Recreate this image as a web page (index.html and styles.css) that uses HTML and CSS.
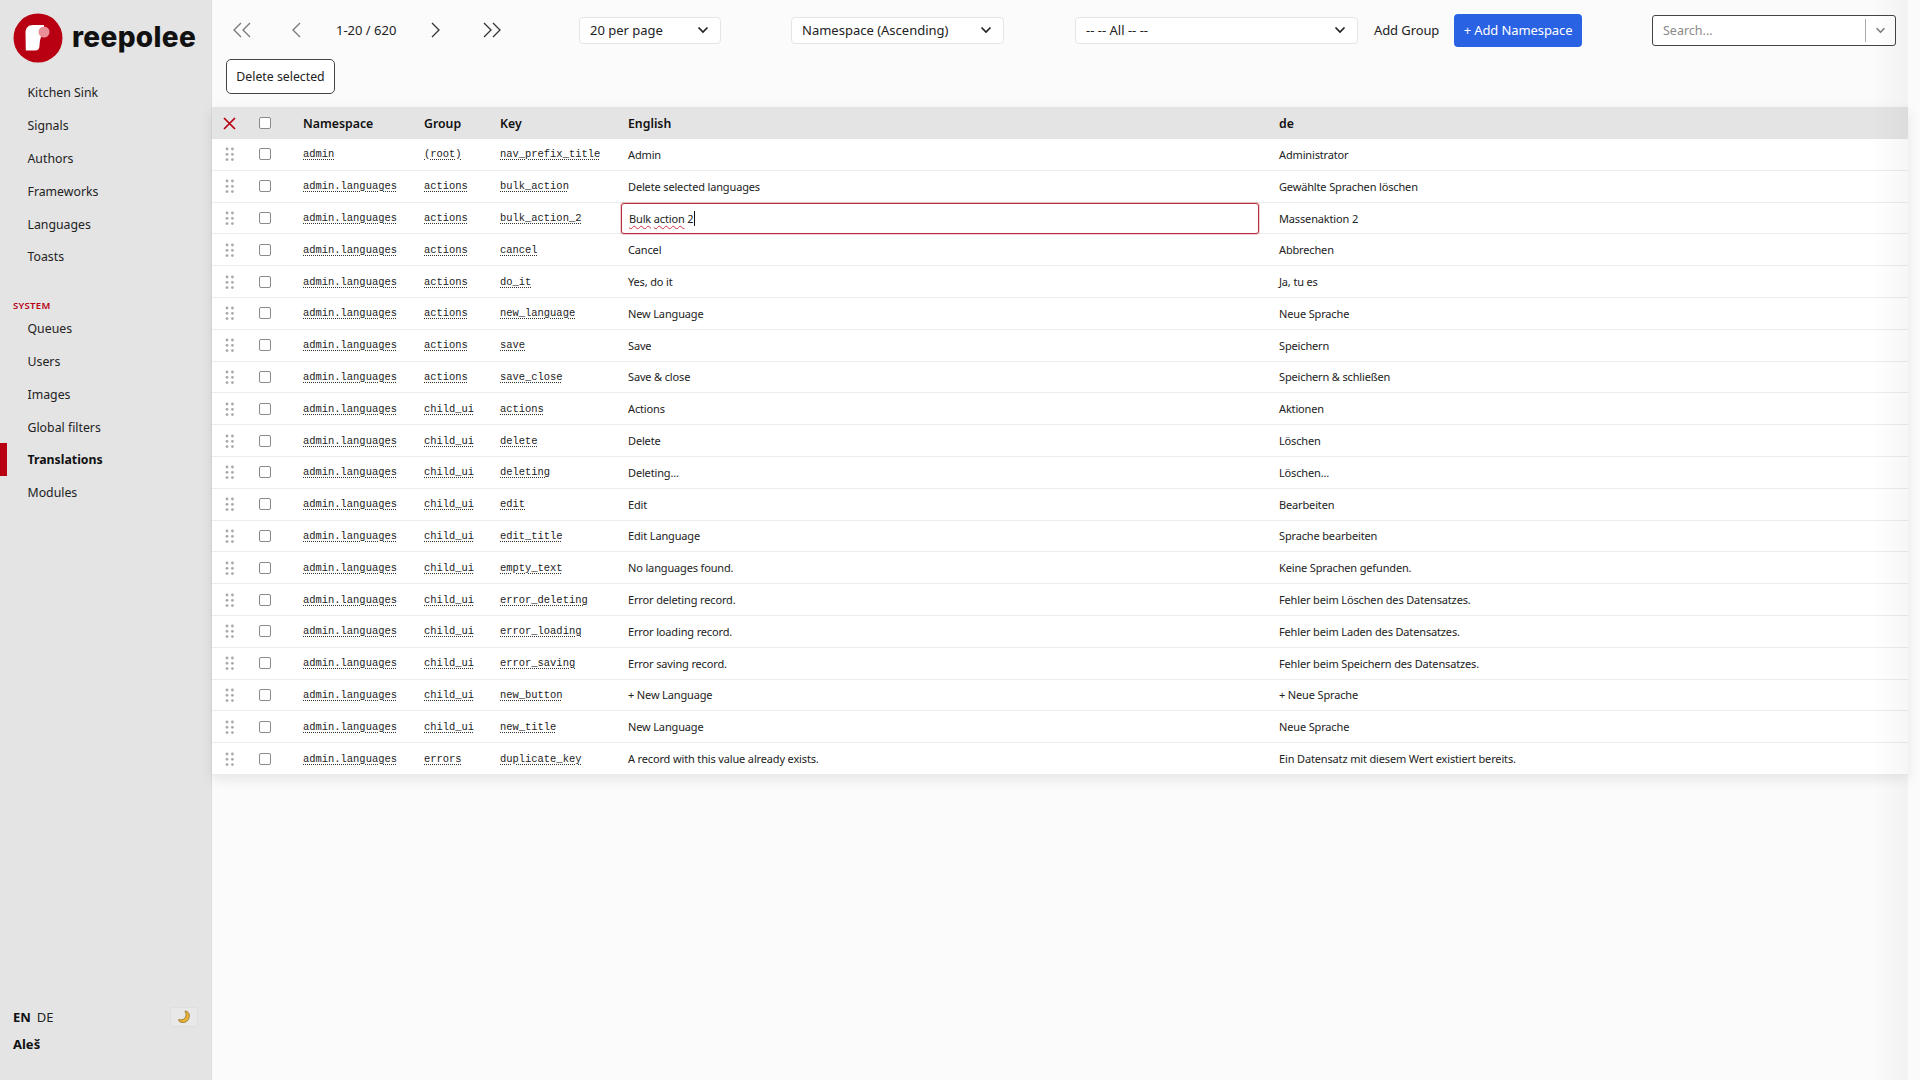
FILE: index.html
```html
<!DOCTYPE html>
<html lang="en">
<head>
    <meta charset="UTF-8">
    <meta name="viewport" content="width=device-width, initial-scale=1.0">
    <title>Translations</title>
    <link rel="stylesheet" href="styles.css">
</head>
<body>
    <svg class="defs" width="0" height="0" aria-hidden="true">
        <symbol id="grip" viewBox="0 0 10 14">
            <circle cx="2" cy="2" r="1.4"/><circle cx="7.4" cy="2" r="1.4"/>
            <circle cx="2" cy="7.3" r="1.4"/><circle cx="7.4" cy="7.3" r="1.4"/>
            <circle cx="2" cy="12.6" r="1.4"/><circle cx="7.4" cy="12.6" r="1.4"/>
        </symbol>
        <symbol id="caret" viewBox="0 0 12 8">
            <path d="M1.5 1.5 6 6l4.5-4.5" fill="none" stroke="currentColor" stroke-width="1.7"/>
        </symbol>
    </svg>

    <aside class="sidebar">
        <a href="#" class="logo">
            <svg class="logo__mark" width="50" height="50" viewBox="0 0 50 50">
                <circle cx="25" cy="25" r="24.5" fill="#b80012"/>
                <path d="M12.500 20C12.500 15 15 12 20 12H31V20C28 22 27 26 26.500 33C26.300 36 25 37.500 22 37.500H12.800Z" fill="#fff"/>
                <circle cx="31" cy="19" r="5.500" fill="#e88f98"/>
            </svg>
            <span class="logo__text">reepolee</span>
        </a>

        <ul class="menu">
            <li class="menu__item"><a href="#" class="menu__link">Kitchen Sink</a></li>
            <li class="menu__item"><a href="#" class="menu__link">Signals</a></li>
            <li class="menu__item"><a href="#" class="menu__link">Authors</a></li>
            <li class="menu__item"><a href="#" class="menu__link">Frameworks</a></li>
            <li class="menu__item"><a href="#" class="menu__link">Languages</a></li>
            <li class="menu__item"><a href="#" class="menu__link">Toasts</a></li>
        </ul>

        <div class="menu__title">SYSTEM</div>
        <ul class="menu">
            <li class="menu__item"><a href="#" class="menu__link">Queues</a></li>
            <li class="menu__item"><a href="#" class="menu__link">Users</a></li>
            <li class="menu__item"><a href="#" class="menu__link">Images</a></li>
            <li class="menu__item"><a href="#" class="menu__link">Global filters</a></li>
            <li class="menu__item menu__item--active"><a href="#" class="menu__link">Translations</a></li>
            <li class="menu__item"><a href="#" class="menu__link">Modules</a></li>
        </ul>

        <div class="sidebar__foot">
            <div class="langs">
                <b>EN</b><span>DE</span>
                <button class="theme" aria-label="Toggle theme">
                    <svg width="14" height="14" viewBox="0 0 14 14">
                        <path d="M8.500 1c1.800.300 3.500 1.500 3.800 4 .3 3.500-1.700 7-5.500 7.500-2.500.3-4.600-.7-5.300-2.300-.2-.6.2-.8.800-.6 3.800 1 6.500-1.300 6.800-4.800 0-1.300-.6-2.500-1.100-3.200-.2-.3 0-.6.500-.6z" fill="#e8b339" stroke="#8a6414" stroke-width=".7"/>
                    </svg>
                </button>
            </div>
            <div class="user">Aleš</div>
        </div>
    </aside>

    <main class="main">
        <div class="toolbar">
            <div class="pager">
                <a href="#" class="pager__btn pager__btn--first"><svg width="22" height="16" viewBox="0 0 22 16"><path d="M9 1 2 8l7 7M18 1l-7 7 7 7"/></svg></a>
                <a href="#" class="pager__btn pager__btn--prev"><svg width="12" height="16" viewBox="0 0 12 16"><path d="M9 1 2 8l7 7"/></svg></a>
                <span class="pager__count">1-20 / 620</span>
                <a href="#" class="pager__btn pager__btn--next"><svg width="12" height="16" viewBox="0 0 12 16"><path d="m3 1 7 7-7 7"/></svg></a>
                <a href="#" class="pager__btn pager__btn--last"><svg width="22" height="16" viewBox="0 0 22 16"><path d="m4 1 7 7-7 7M13 1l7 7-7 7"/></svg></a>
            </div>
            <div class="select select--per-page">20 per page<svg class="select__caret" width="12" height="8"><use href="#caret"/></svg></div>
            <div class="select select--sort">Namespace (Ascending)<svg class="select__caret" width="12" height="8"><use href="#caret"/></svg></div>
            <div class="select select--group">-- -- All -- --<svg class="select__caret" width="12" height="8"><use href="#caret"/></svg></div>
            <a href="#" class="link-btn">Add Group</a>
            <a href="#" class="btn-primary">+ Add Namespace</a>
            <div class="search">
                <span class="search__input">Search...</span>
                <span class="search__toggle"><svg width="11" height="7"><use href="#caret"/></svg></span>
            </div>
        </div>

        <div class="actions">
            <button class="btn">Delete selected</button>
        </div>

        <div class="table">
            <div class="row row--head">
                <span class="cell cell--x"><svg width="13" height="13" viewBox="0 0 13 13"><path d="m1 1 11 11M12 1 1 12" fill="none" stroke="#b80012" stroke-width="1.700"/></svg></span>
                <span class="cell"><input class="check" type="checkbox"></span>
                <span class="cell">Namespace</span>
                <span class="cell">Group</span>
                <span class="cell">Key</span>
                <span class="cell">English</span>
                <span class="cell">de</span>
            </div>

            <div class="row">
                <span class="cell cell--grip"><svg class="grip" width="10" height="14"><use href="#grip"/></svg></span>
                <span class="cell"><input class="check" type="checkbox"></span>
                <span class="cell"><span class="code">admin</span></span>
                <span class="cell"><span class="code">(root)</span></span>
                <span class="cell"><span class="code">nav_prefix_title</span></span>
                <span class="cell">Admin</span>
                <span class="cell">Administrator</span>
            </div>
            <div class="row">
                <span class="cell cell--grip"><svg class="grip" width="10" height="14"><use href="#grip"/></svg></span>
                <span class="cell"><input class="check" type="checkbox"></span>
                <span class="cell"><span class="code">admin.languages</span></span>
                <span class="cell"><span class="code">actions</span></span>
                <span class="cell"><span class="code">bulk_action</span></span>
                <span class="cell">Delete selected languages</span>
                <span class="cell">Gewählte Sprachen löschen</span>
            </div>
            <div class="row">
                <span class="cell cell--grip"><svg class="grip" width="10" height="14"><use href="#grip"/></svg></span>
                <span class="cell"><input class="check" type="checkbox"></span>
                <span class="cell"><span class="code">admin.languages</span></span>
                <span class="cell"><span class="code">actions</span></span>
                <span class="cell"><span class="code">bulk_action_2</span></span>
                <span class="cell"><span class="editor"><span class="typo">Bulk</span> <span class="typo">action</span> <span class="editor__end">2</span></span></span>
                <span class="cell">Massenaktion 2</span>
            </div>
            <div class="row">
                <span class="cell cell--grip"><svg class="grip" width="10" height="14"><use href="#grip"/></svg></span>
                <span class="cell"><input class="check" type="checkbox"></span>
                <span class="cell"><span class="code">admin.languages</span></span>
                <span class="cell"><span class="code">actions</span></span>
                <span class="cell"><span class="code">cancel</span></span>
                <span class="cell">Cancel</span>
                <span class="cell">Abbrechen</span>
            </div>
            <div class="row">
                <span class="cell cell--grip"><svg class="grip" width="10" height="14"><use href="#grip"/></svg></span>
                <span class="cell"><input class="check" type="checkbox"></span>
                <span class="cell"><span class="code">admin.languages</span></span>
                <span class="cell"><span class="code">actions</span></span>
                <span class="cell"><span class="code">do_it</span></span>
                <span class="cell">Yes, do it</span>
                <span class="cell">Ja, tu es</span>
            </div>
            <div class="row">
                <span class="cell cell--grip"><svg class="grip" width="10" height="14"><use href="#grip"/></svg></span>
                <span class="cell"><input class="check" type="checkbox"></span>
                <span class="cell"><span class="code">admin.languages</span></span>
                <span class="cell"><span class="code">actions</span></span>
                <span class="cell"><span class="code">new_language</span></span>
                <span class="cell">New Language</span>
                <span class="cell">Neue Sprache</span>
            </div>
            <div class="row">
                <span class="cell cell--grip"><svg class="grip" width="10" height="14"><use href="#grip"/></svg></span>
                <span class="cell"><input class="check" type="checkbox"></span>
                <span class="cell"><span class="code">admin.languages</span></span>
                <span class="cell"><span class="code">actions</span></span>
                <span class="cell"><span class="code">save</span></span>
                <span class="cell">Save</span>
                <span class="cell">Speichern</span>
            </div>
            <div class="row">
                <span class="cell cell--grip"><svg class="grip" width="10" height="14"><use href="#grip"/></svg></span>
                <span class="cell"><input class="check" type="checkbox"></span>
                <span class="cell"><span class="code">admin.languages</span></span>
                <span class="cell"><span class="code">actions</span></span>
                <span class="cell"><span class="code">save_close</span></span>
                <span class="cell">Save &amp; close</span>
                <span class="cell">Speichern &amp; schließen</span>
            </div>
            <div class="row">
                <span class="cell cell--grip"><svg class="grip" width="10" height="14"><use href="#grip"/></svg></span>
                <span class="cell"><input class="check" type="checkbox"></span>
                <span class="cell"><span class="code">admin.languages</span></span>
                <span class="cell"><span class="code">child_ui</span></span>
                <span class="cell"><span class="code">actions</span></span>
                <span class="cell">Actions</span>
                <span class="cell">Aktionen</span>
            </div>
            <div class="row">
                <span class="cell cell--grip"><svg class="grip" width="10" height="14"><use href="#grip"/></svg></span>
                <span class="cell"><input class="check" type="checkbox"></span>
                <span class="cell"><span class="code">admin.languages</span></span>
                <span class="cell"><span class="code">child_ui</span></span>
                <span class="cell"><span class="code">delete</span></span>
                <span class="cell">Delete</span>
                <span class="cell">Löschen</span>
            </div>
            <div class="row">
                <span class="cell cell--grip"><svg class="grip" width="10" height="14"><use href="#grip"/></svg></span>
                <span class="cell"><input class="check" type="checkbox"></span>
                <span class="cell"><span class="code">admin.languages</span></span>
                <span class="cell"><span class="code">child_ui</span></span>
                <span class="cell"><span class="code">deleting</span></span>
                <span class="cell">Deleting...</span>
                <span class="cell">Löschen...</span>
            </div>
            <div class="row">
                <span class="cell cell--grip"><svg class="grip" width="10" height="14"><use href="#grip"/></svg></span>
                <span class="cell"><input class="check" type="checkbox"></span>
                <span class="cell"><span class="code">admin.languages</span></span>
                <span class="cell"><span class="code">child_ui</span></span>
                <span class="cell"><span class="code">edit</span></span>
                <span class="cell">Edit</span>
                <span class="cell">Bearbeiten</span>
            </div>
            <div class="row">
                <span class="cell cell--grip"><svg class="grip" width="10" height="14"><use href="#grip"/></svg></span>
                <span class="cell"><input class="check" type="checkbox"></span>
                <span class="cell"><span class="code">admin.languages</span></span>
                <span class="cell"><span class="code">child_ui</span></span>
                <span class="cell"><span class="code">edit_title</span></span>
                <span class="cell">Edit Language</span>
                <span class="cell">Sprache bearbeiten</span>
            </div>
            <div class="row">
                <span class="cell cell--grip"><svg class="grip" width="10" height="14"><use href="#grip"/></svg></span>
                <span class="cell"><input class="check" type="checkbox"></span>
                <span class="cell"><span class="code">admin.languages</span></span>
                <span class="cell"><span class="code">child_ui</span></span>
                <span class="cell"><span class="code">empty_text</span></span>
                <span class="cell">No languages found.</span>
                <span class="cell">Keine Sprachen gefunden.</span>
            </div>
            <div class="row">
                <span class="cell cell--grip"><svg class="grip" width="10" height="14"><use href="#grip"/></svg></span>
                <span class="cell"><input class="check" type="checkbox"></span>
                <span class="cell"><span class="code">admin.languages</span></span>
                <span class="cell"><span class="code">child_ui</span></span>
                <span class="cell"><span class="code">error_deleting</span></span>
                <span class="cell">Error deleting record.</span>
                <span class="cell">Fehler beim Löschen des Datensatzes.</span>
            </div>
            <div class="row">
                <span class="cell cell--grip"><svg class="grip" width="10" height="14"><use href="#grip"/></svg></span>
                <span class="cell"><input class="check" type="checkbox"></span>
                <span class="cell"><span class="code">admin.languages</span></span>
                <span class="cell"><span class="code">child_ui</span></span>
                <span class="cell"><span class="code">error_loading</span></span>
                <span class="cell">Error loading record.</span>
                <span class="cell">Fehler beim Laden des Datensatzes.</span>
            </div>
            <div class="row">
                <span class="cell cell--grip"><svg class="grip" width="10" height="14"><use href="#grip"/></svg></span>
                <span class="cell"><input class="check" type="checkbox"></span>
                <span class="cell"><span class="code">admin.languages</span></span>
                <span class="cell"><span class="code">child_ui</span></span>
                <span class="cell"><span class="code">error_saving</span></span>
                <span class="cell">Error saving record.</span>
                <span class="cell">Fehler beim Speichern des Datensatzes.</span>
            </div>
            <div class="row">
                <span class="cell cell--grip"><svg class="grip" width="10" height="14"><use href="#grip"/></svg></span>
                <span class="cell"><input class="check" type="checkbox"></span>
                <span class="cell"><span class="code">admin.languages</span></span>
                <span class="cell"><span class="code">child_ui</span></span>
                <span class="cell"><span class="code">new_button</span></span>
                <span class="cell">+ New Language</span>
                <span class="cell">+ Neue Sprache</span>
            </div>
            <div class="row">
                <span class="cell cell--grip"><svg class="grip" width="10" height="14"><use href="#grip"/></svg></span>
                <span class="cell"><input class="check" type="checkbox"></span>
                <span class="cell"><span class="code">admin.languages</span></span>
                <span class="cell"><span class="code">child_ui</span></span>
                <span class="cell"><span class="code">new_title</span></span>
                <span class="cell">New Language</span>
                <span class="cell">Neue Sprache</span>
            </div>
            <div class="row">
                <span class="cell cell--grip"><svg class="grip" width="10" height="14"><use href="#grip"/></svg></span>
                <span class="cell"><input class="check" type="checkbox"></span>
                <span class="cell"><span class="code">admin.languages</span></span>
                <span class="cell"><span class="code">errors</span></span>
                <span class="cell"><span class="code">duplicate_key</span></span>
                <span class="cell">A record with this value already exists.</span>
                <span class="cell">Ein Datensatz mit diesem Wert existiert bereits.</span>
            </div>
        </div>
    </main>
</body>
</html>
```

FILE: styles.css
```css
:root {
    --red: #b80012;
    --sidebar-bg: #e4e4e4;
    --page-bg: #fafafa;
    --text: #222;
    --line: #ececec;
}

* {
    box-sizing: border-box;
}

html, body {
    height: 100%;
}

body {
    margin: 0;
    display: flex;
    height: 1080px;
    overflow: hidden;
    background-color: var(--page-bg);
    color: var(--text);
    font-family: "Noto Sans", "Open Sans", sans-serif;
    font-size: 13px;
}

a {
    color: inherit;
    text-decoration: none;
}

.defs {
    position: absolute;
}

/* SIDEBAR */
.sidebar {
    flex: 0 0 212px;
    display: flex;
    flex-direction: column;
    background-color: var(--sidebar-bg);
    border-right: 1px solid #dcdcdc;
    font-size: 12.300px;
}

.logo {
    display: flex;
    align-items: center;
    gap: 9px;
    padding: 0 0 1px 13px;
    height: 76.5px;
}
.logo__text {
    font-family: "Inter", sans-serif;
    font-size: 28px;
    font-weight: 800;
    letter-spacing: 0.35px;
    color: #111;
    margin-top: -1px;
}

.menu {
    list-style: none;
    margin: 0;
    padding: 0;
}
.menu__item {
    height: 32.8px;
    display: flex;
    align-items: center;
    padding-left: 27.5px;
}
.menu__item--active {
    font-weight: 700;
    color: #111;
    box-shadow: inset 7px 0 0 var(--red);
}
.menu__title {
    margin-top: 24.5px;
    padding-left: 13px;
    height: 14.5px;
    font-size: 9.500px;
    font-weight: 600;
    letter-spacing: 0.3px;
    line-height: 16px;
    color: var(--red);
}

.sidebar__foot {
    margin-top: auto;
    padding: 0 13px 26px;
    font-size: 13px;
}
.langs {
    display: flex;
    align-items: center;
    gap: 6px;
    height: 20px;
    position: relative;
    top: 1px;
}
.langs b {
    color: #111;
}
.theme {
    margin-left: auto;
    width: 28px;
    height: 20px;
    padding: 0;
    display: flex;
    align-items: center;
    justify-content: center;
    border: 1px solid #dedede;
    border-radius: 3px;
    background-color: #e8e8e8;
}
.user {
    margin-top: 8px;
    font-weight: 700;
    color: #111;
    line-height: 20px;
}

/* MAIN */
.main {
    flex: 1;
    min-width: 0;
    padding-right: 12px;
    position: relative;
    background-color: #fbfbfb;
}
/* soft shade that sits over the right end of the table */
.main::after {
    content: "";
    position: absolute;
    top: 0;
    bottom: 0;
    right: 12px;
    width: 36px;
    background: linear-gradient(to right, rgba(0, 0, 0, 0), rgba(0, 0, 0, 0.035));
    pointer-events: none;
}

.toolbar {
    display: flex;
    align-items: center;
    height: 59px;
    padding-top: 1px;
}

.pager {
    display: flex;
    align-items: center;
    margin-left: 20px;
    width: 347px;
}
.pager svg {
    display: block;
    fill: none;
    stroke: #333;
    stroke-width: 1.3;
}
.pager__btn--prev {
    margin-left: 37px;
}
.pager__count {
    margin-left: 33px;
    width: 60px;
    white-space: nowrap;
}
.pager__btn--next {
    margin-left: 33px;
}
.pager__btn--last {
    margin-left: 39px;
}
.pager__btn--first svg {
    stroke: #777;
}
.pager__btn--prev svg {
    stroke: #777;
}

.select {
    display: flex;
    align-items: center;
    justify-content: space-between;
    height: 27px;
    padding: 0 11px 0 10px;
    background-color: #fff;
    border: 1px solid #e6e6e6;
    border-radius: 4px;
    white-space: nowrap;
}
.select--per-page {
    width: 142px;
}
.select--sort {
    margin-left: 70px;
    width: 213px;
}
.select--group {
    margin-left: 71px;
    width: 283px;
}

.link-btn {
    margin-left: 16px;
    width: 65px;
    white-space: nowrap;
    letter-spacing: -0.1px;
}
.btn-primary {
    margin-left: 15px;
    width: 128px;
    height: 33px;
    display: flex;
    align-items: center;
    justify-content: center;
    border-radius: 4px;
    background-color: #2a62e4;
    color: #fff;
    white-space: nowrap;
    letter-spacing: -0.1px;
}

.search {
    margin-left: 70px;
    width: 244px;
    height: 31px;
    display: flex;
    align-items: center;
    background-color: #fff;
    border: 1px solid #444;
    border-radius: 3px;
}
.search__input {
    flex: 1;
    padding-left: 10px;
    color: #8a8a8a;
    font-size: 12.500px;
}
.search__toggle {
    width: 30px;
    height: 23px;
    display: flex;
    align-items: center;
    justify-content: center;
    border-left: 1px solid #aaa;
    color: #777;
}

.actions {
    height: 48px;
    padding-left: 14px;
}
.btn {
    width: 109px;
    height: 35px;
    padding: 0 0 1px;
    border: 1px solid #444;
    border-radius: 5px;
    background-color: #fff;
    color: var(--text);
    font: inherit;
    font-size: 12.300px;
}

/* TABLE */
.table {
    background-color: #fff;
    box-shadow: 0 4px 12px rgba(0, 0, 0, 0.09);
    font-size: 11px;
    letter-spacing: -0.15px;
}
.row {
    display: grid;
    grid-template-columns: 36px 55px 121px 76px 128px 651px 1fr;
    height: 31.8px;
    align-items: center;
    border-bottom: 1px solid var(--line);
}
.row--head {
    height: 32px;
    background-color: #e4e4e4;
    border-bottom: 0;
    font-size: 12.300px;
    font-weight: 600;
    letter-spacing: 0;
    color: #111;
}
.cell {
    display: flex;
    align-items: center;
    white-space: nowrap;
}
.cell--x, .cell--grip {
    justify-content: center;
    padding-right: 1px;
}
.grip {
    display: block;
    fill: #a8a8a8;
}
.check {
    appearance: none;
    margin: 0 0 0 11px;
    width: 12px;
    height: 12px;
    background-color: #fff;
    border: 1px solid #8a8a8a;
    border-radius: 2px;
}
.code {
    font-family: "Liberation Mono", monospace;
    font-size: 10.450px;
    letter-spacing: 0;
    color: #222;
    text-decoration: underline dotted #333;
    text-underline-offset: 2px;
}

.editor {
    display: block;
    margin-left: -7px;
    width: 638px;
    height: 31px;
    padding-left: 7px;
    line-height: 29px;
    background-color: #fff;
    border: 1px solid #b8303e;
    border-radius: 3px;
    box-shadow: 0 0 0 1px rgba(184, 0, 18, 0.2);
}
.typo {
    text-decoration: underline wavy #d03040 1px;
    text-underline-offset: 2px;
}
.editor__end {
    border-right: 1px solid #111;
    padding-right: 1px;
}
```
